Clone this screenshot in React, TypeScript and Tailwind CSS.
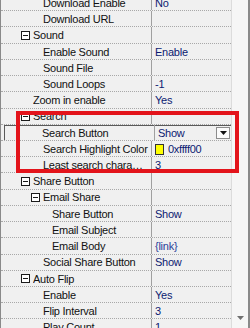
import React from "react";

type Row = {
  label: string;
  value?: string;
  level: 0 | 1 | 2;
  group?: boolean;
  kind?: "select" | "color";
};

const rows: Row[] = [
  { label: "Download Enable", value: "No", level: 1 },
  { label: "Download URL", level: 1 },
  { label: "Sound", level: 0, group: true },
  { label: "Enable Sound", value: "Enable", level: 1 },
  { label: "Sound File", level: 1 },
  { label: "Sound Loops", value: "-1", level: 1 },
  { label: "Zoom in enable", value: "Yes", level: 0 },
  { label: "Search", level: 0, group: true },
  { label: "Search Button", value: "Show", level: 1, kind: "select" },
  { label: "Search Highlight Color", value: "0xffff00", level: 1, kind: "color" },
  { label: "Least search characters", value: "3", level: 1 },
  { label: "Share Button", level: 0, group: true },
  { label: "Email Share", level: 1, group: true },
  { label: "Share Button", value: "Show", level: 2 },
  { label: "Email Subject", level: 2 },
  { label: "Email Body", value: "{link}", level: 2 },
  { label: "Social Share Button", value: "Show", level: 1 },
  { label: "Auto Flip", level: 0, group: true },
  { label: "Enable", value: "Yes", level: 1 },
  { label: "Flip Interval", value: "3", level: 1 },
  { label: "Play Count", value: "1", level: 1 },
];

const textPad = ["pl-[32px]", "pl-[42px]", "pl-[51px]"];
const groupPad = ["pl-[20px]", "pl-[30px]", "pl-[39px]"];

function MinusBox() {
  return (
    <span className="mr-[3px] flex h-[9px] w-[9px] shrink-0 items-center justify-center border border-[#1a1a1a] bg-white">
      <span className="h-px w-[5px] bg-[#1a1a1a]" />
    </span>
  );
}

function PropRow({ row }: { row: Row }) {
  const selected = row.kind === "select";

  return (
    <div className="flex h-[16.23px] border-b border-dotted border-[#a8a8a8]">
      <div
        className={
          "flex w-[150px] shrink-0 items-center overflow-hidden whitespace-nowrap pt-[1px] text-[#111] " +
          (row.group ? groupPad[row.level] : textPad[row.level]) +
          (selected ? " ml-[3px] border-l border-t border-[#5a5a5a] !pl-[37px]" : "")
        }
      >
        {row.group && <MinusBox />}
        <span className="truncate pr-[3px]">{row.label}</span>
      </div>

      <div className="w-px shrink-0 bg-[#a0a0a0]" />

      {selected ? (
        <div className="flex flex-1 items-center justify-between border-t border-[#5a5a5a] pl-[3px] pr-[1px] text-[#0c1a70]">
          <span className="pt-[1px]">{row.value}</span>
          <span className="flex h-[12px] w-[14px] items-center justify-center border border-[#8c8c8c] bg-[#fbfbfb]">
            <svg width="7" height="4" viewBox="0 0 7 4">
              <path d="M0 0h7L3.5 4z" fill="#111" />
            </svg>
          </span>
        </div>
      ) : (
        <div className="flex flex-1 items-center pl-[3px] pt-[1px] text-[#0c1a70]">
          {row.kind === "color" && (
            <span className="mr-[4px] h-[11px] w-[9px] border border-[#333] bg-[#ffff00]" />
          )}
          <span className={row.value === "{link}" ? "text-[#2a3f9a]" : ""}>{row.value}</span>
        </div>
      )}
    </div>
  );
}

export default function App() {
  return (
    <div
      className="relative flex h-[328px] w-[250px] overflow-hidden border-l border-r-2 border-[#8a8a8a] bg-[#f0f0f0] text-[11px] tracking-[-0.25px]"
      style={{ fontFamily: '"Liberation Sans", Arial, sans-serif' }}
    >
      <div className="w-[230px] shrink-0">
        <div className="mt-[-5px]">
          {rows.map((row, i) => (
            <PropRow key={i} row={row} />
          ))}
        </div>
      </div>

      {/* scrollbar */}
      <div className="flex flex-1 flex-col justify-end border-l border-[#dcdcdc] bg-[#f6f6f6] pb-[8px]">
        <svg className="ml-[5px]" width="7" height="4" viewBox="0 0 7 4">
          <path d="M0 0h7L3.5 4z" fill="#707070" />
        </svg>
      </div>

      {/* annotation */}
      <div className="absolute left-[15px] top-[111px] h-[62px] w-[223px] border-4 border-[#e3141b]" />
    </div>
  );
}
